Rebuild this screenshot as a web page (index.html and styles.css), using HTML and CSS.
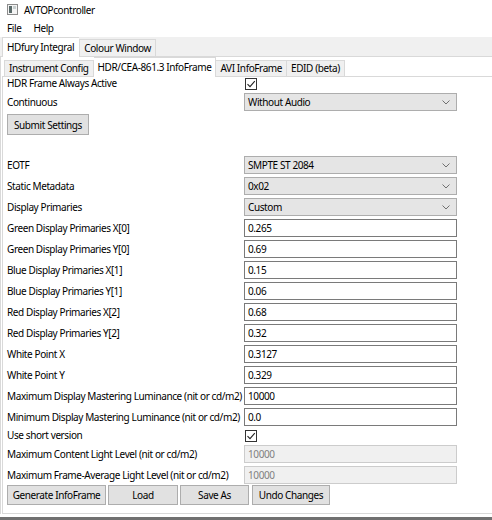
FILE: index.html
```html
<!DOCTYPE html>
<html>
<head>
<meta charset="utf-8">
<link rel="stylesheet" href="styles.css">
</head>
<body>
<div class="window">
  <div class="titlebar">
    <svg class="appicon" width="11" height="11" viewBox="0 0 11 11"><rect x="0.5" y="0.5" width="10" height="10" fill="#f4f4f4" stroke="#8c8c8c"/><rect x="2" y="2" width="3" height="7" fill="#5a6a6a"/><rect x="6" y="2" width="3" height="3" fill="#c8d0d0"/></svg>
    <span class="title">AVTOPcontroller</span>
  </div>
  <div class="menubar">
    <span class="menu">File</span>
    <span class="menu">Help</span>
  </div>
  <div class="outertabs">
    <div class="otab selected">HDfury Integral</div>
    <div class="otab">Colour Window</div>
  </div>
  <div class="outerpane">
    <div class="innertabs">
      <div class="itab first">Instrument Config</div>
      <div class="itab selected">HDR/CEA-861.3 InfoFrame</div>
      <div class="itab">AVI InfoFrame</div>
      <div class="itab">EDID (beta)</div>
    </div>
    <div class="innerpane">
      <div class="form">
        <div class="label">HDR Frame Always Active</div>
        <div class="field"><span class="check"><svg width="10" height="10" viewBox="0 0 10 10"><path d="M1.5 5.2 L4 7.7 L8.8 2.2" fill="none" stroke="#222" stroke-width="1.1"/></svg></span></div>
        <div class="label">Continuous</div>
        <div class="combo">Without Audio<svg class="chev" width="8" height="5" viewBox="0 0 8 5"><path d="M0.5 0.5 L4 4 L7.5 0.5" fill="none" stroke="#707070" stroke-width="1"/></svg></div>
      </div>
      <div class="submitrow"><button class="btn submit">Submit Settings</button></div>
      <div class="form second">
        <div class="label">EOTF</div>
        <div class="combo">SMPTE ST 2084<svg class="chev" width="8" height="5" viewBox="0 0 8 5"><path d="M0.5 0.5 L4 4 L7.5 0.5" fill="none" stroke="#707070" stroke-width="1"/></svg></div>
        <div class="label">Static Metadata</div>
        <div class="combo">0x02<svg class="chev" width="8" height="5" viewBox="0 0 8 5"><path d="M0.5 0.5 L4 4 L7.5 0.5" fill="none" stroke="#707070" stroke-width="1"/></svg></div>
        <div class="label">Display Primaries</div>
        <div class="combo">Custom<svg class="chev" width="8" height="5" viewBox="0 0 8 5"><path d="M0.5 0.5 L4 4 L7.5 0.5" fill="none" stroke="#707070" stroke-width="1"/></svg></div>
        <div class="label">Green Display Primaries X[0]</div>
        <div class="input">0.265</div>
        <div class="label">Green Display Primaries Y[0]</div>
        <div class="input">0.69</div>
        <div class="label">Blue Display Primaries X[1]</div>
        <div class="input">0.15</div>
        <div class="label">Blue Display Primaries Y[1]</div>
        <div class="input">0.06</div>
        <div class="label">Red Display Primaries X[2]</div>
        <div class="input">0.68</div>
        <div class="label">Red Display Primaries Y[2]</div>
        <div class="input">0.32</div>
        <div class="label">White Point X</div>
        <div class="input">0.3127</div>
        <div class="label">White Point Y</div>
        <div class="input">0.329</div>
        <div class="label">Maximum Display Mastering Luminance (nit or cd/m2)</div>
        <div class="input">10000</div>
        <div class="label">Minimum Display Mastering Luminance (nit or cd/m2)</div>
        <div class="input">0.0</div>
        <div class="label">Use short version</div>
        <div class="field"><span class="check"><svg width="10" height="10" viewBox="0 0 10 10"><path d="M1.5 5.2 L4 7.7 L8.8 2.2" fill="none" stroke="#222" stroke-width="1.1"/></svg></span></div>
        <div class="label">Maximum Content Light Level (nit or cd/m2)</div>
        <div class="input disabled">10000</div>
        <div class="label">Maximum Frame-Average Light Level (nit or cd/m2)</div>
        <div class="input disabled">10000</div>
      </div>
      <div class="buttons">
        <button class="btn w-gen">Generate InfoFrame</button>
        <button class="btn w-load">Load</button>
        <button class="btn w-save">Save As</button>
        <button class="btn w-undo">Undo Changes</button>
      </div>
    </div>
  </div>
  <div class="bottomedge"></div>
</div>
</body>
</html>
```
FILE: styles.css
```css
html, body {
  margin: 0;
  padding: 0;
  background: #ffffff;
}
body {
  font-family: "Noto Sans", "Open Sans", sans-serif;
  font-size: 10px;
  letter-spacing: -0.4px;
  color: #000;
  width: 492px;
  height: 520px;
  overflow: hidden;
}
.window {
  display: flex;
  flex-direction: column;
  height: 520px;
}
.titlebar {
  height: 19px;
  display: flex;
  align-items: center;
  padding-left: 7px;
  gap: 6px;
  background: #fff;
}
.title {
  font-size: 10px;
  line-height: 14px;
}
.menubar {
  height: 18px;
  display: flex;
  align-items: center;
  padding-left: 7px;
  gap: 12px;
  background: #fff;
}
.outertabs {
  height: 19px;
  background: #f0f0f0;
  display: flex;
  align-items: flex-end;
  padding-left: 2px;
}
.otab {
  height: 17px;
  line-height: 16px;
  padding: 0 4px;
  border: 1px solid #d9d9d9;
  border-bottom: none;
  background: #f0f0f0;
  box-sizing: border-box;
}
.otab.selected {
  height: 20px;
  margin-bottom: -1px;
  background: #fff;
  line-height: 18px;
  position: relative;
  z-index: 1;
  border-right: none;
  padding: 0 5px 0 4px;
}
.outerpane {
  flex: 1;
  background: #fff;
  border-top: 1px solid #d9d9d9;
  border-left: 1px solid #d9d9d9;
  display: flex;
  flex-direction: column;
  padding-left: 1px;
}
.innertabs {
  height: 19px;
  display: flex;
  align-items: flex-end;
  padding-left: 2px;
}
.itab {
  height: 16px;
  line-height: 15px;
  padding: 0 4px;
  background: #f0f0f0;
  border: 1px solid #d9d9d9;
  border-bottom: none;
  border-left: none;
  box-sizing: border-box;
}
.itab.first {
  border-left: 1px solid #d9d9d9;
}
.itab.selected {
  height: 20px;
  margin-bottom: -1px;
  background: #fff;
  line-height: 18px;
  position: relative;
  z-index: 1;
}
.innerpane {
  flex: 1;
  border-top: 1px solid #d9d9d9;
  border-left: 1px solid #d9d9d9;
  border-bottom: 1px solid #d9d9d9;
  padding: 0 0 0 4px;
  display: flex;
  flex-direction: column;
}
.form {
  display: grid;
  grid-template-columns: 237px 213px;
  row-gap: 3px;
  align-items: center;
}
.form.second {
  margin-top: 21px;
}
.label {
  white-space: nowrap;
  line-height: 13px;
}
.field {
  height: 13px;
  display: flex;
  align-items: center;
}
.check {
  width: 12px;
  height: 12px;
  box-sizing: border-box;
  border: 1px solid #333;
  background: #fff;
  display: flex;
  align-items: center;
  justify-content: center;
  margin-left: 1px;
}
.combo {
  height: 18px;
  box-sizing: border-box;
  background: #e5e5e5;
  border: 1px solid #adadad;
  padding-left: 3px;
  line-height: 16px;
  position: relative;
}
.chev {
  position: absolute;
  right: 6px;
  top: 6px;
}
.input {
  height: 18px;
  box-sizing: border-box;
  border: 1px solid #7a7a7a;
  background: #fff;
  padding-left: 3px;
  line-height: 16px;
}
.input.disabled {
  border-color: #cccccc;
  background: #f0f0f0;
  color: #808080;
}
.submitrow {
  margin-top: 3px;
  display: flex;
}
.btn {
  font-family: inherit;
  font-size: 10px;
  letter-spacing: -0.4px;
  color: #000;
  background: #e1e1e1;
  border: 1px solid #adadad;
  height: 21px;
  padding: 0;
  margin: 0;
  box-sizing: border-box;
  white-space: nowrap;
}
.submit {
  width: 82px;
}
.buttons {
  display: flex;
  gap: 2px;
  margin-top: 1px;
}
.w-gen { width: 99px; height: 20px; }
.w-load { width: 70px; height: 20px; }
.w-save { width: 69px; height: 20px; }
.w-undo { width: 78px; height: 20px; margin-left: 1px; }
.bottomedge {
  height: 3px;
  background: #fff;
  border-bottom: 3px solid #707070;
}
```
